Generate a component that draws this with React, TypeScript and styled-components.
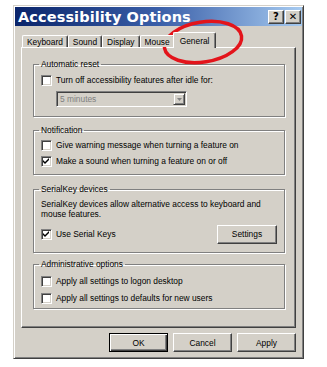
import React from 'react';
import styled, { createGlobalStyle } from 'styled-components';

const FACE = '#d4d0c8';
const SHADOW = '#808080';
const DARK = '#404040';
const FONT = `"Liberation Sans", Arial, sans-serif`;

const GlobalStyle = createGlobalStyle`
    html, body {
        margin: 0;
        background: #fff;
    }
    body {
        font-family: ${FONT};
        font-size: 8.4px;
        color: #000;
    }
`;

const Page = styled.div`
    padding: 5px 0 0 13px;
    width: 327px;
    height: 367px;
    box-sizing: border-box;
`;

const Dialog = styled.div`
    position: relative;
    width: 291px;
    height: 354px;
    box-sizing: border-box;
    background: ${FACE};
    border: 1px solid;
    border-color: ${FACE} ${DARK} ${DARK} ${FACE};
    box-shadow: inset 1px 1px 0 #fff, inset -1px -1px 0 ${SHADOW};
    padding: 1px;
    display: flex;
    flex-direction: column;
`;

const TitleBar = styled.div`
    height: 19px;
    display: flex;
    align-items: center;
    justify-content: space-between;
    padding: 0 1px 0 3px;
    background: linear-gradient(to right, #0a246a 0%, #3a5fa8 50%, #a6caf0 100%);
`;

const Title = styled.span`
    font-family: "DejaVu Sans", Verdana, sans-serif;
    font-weight: bold;
    font-size: 14.5px;
    color: #fff;
    letter-spacing: 0.1px;
`;

const TitleButtons = styled.div`
    display: flex;
    gap: 1px;
`;

const TitleButton = styled.div`
    width: 16px;
    height: 14px;
    box-sizing: border-box;
    background: ${FACE};
    border: 1px solid;
    border-color: #fff ${DARK} ${DARK} #fff;
    box-shadow: inset -1px -1px 0 ${SHADOW};
    display: flex;
    align-items: center;
    justify-content: center;
    font-weight: bold;
    font-size: 10px;
    font-family: "DejaVu Sans", sans-serif;
`;

const Body = styled.div`
    padding: 6px 6px 0 6px;
    display: flex;
    flex-direction: column;
`;

const TabStrip = styled.div`
    display: flex;
    align-items: flex-end;
    padding-left: 1px;
    height: 15px;
    position: relative;
    z-index: 1;
`;

const Tab = styled.div<{ $active?: boolean }>`
    height: ${p => (p.$active ? 16 : 12)}px;
    padding: 0 ${p => (p.$active ? 6 : 4)}px;
    margin: 0 ${p => (p.$active ? -2 : 0)}px;
    margin-bottom: ${p => (p.$active ? -1 : 0)}px;
    box-sizing: border-box;
    display: flex;
    align-items: center;
    background: ${FACE};
    border-top: 1px solid #fff;
    border-left: 1px solid #fff;
    border-right: 1px solid ${DARK};
    border-radius: 2px 2px 0 0;
    box-shadow: inset -1px 0 0 ${SHADOW};
    position: relative;
    z-index: ${p => (p.$active ? 2 : 0)};
`;

const Panel = styled.div`
    height: 281px;
    box-sizing: border-box;
    border: 1px solid;
    border-color: #fff ${DARK} ${DARK} #fff;
    box-shadow: inset -1px -1px 0 ${SHADOW};
    padding: 11px 10px 0 11px;
    display: flex;
    flex-direction: column;
`;

const Group = styled.fieldset<{ $gap: number; $bottom: number }>`
    margin: ${p => p.$gap}px 0 0 0;
    padding: 0 7px ${p => p.$bottom}px 7px;
    border: 1px solid ${SHADOW};
    box-shadow: 1px 1px 0 #fff, inset 1px 1px 0 #fff;
    min-inline-size: 0;
    display: flex;
    flex-direction: column;
`;

const Legend = styled.legend`
    padding: 0 2px;
    margin-left: -2px;
    line-height: 10px;
    height: 10px;
`;

const Row = styled.label<{ $top: number }>`
    display: flex;
    align-items: center;
    gap: 4px;
    height: 14px;
    margin-top: ${p => p.$top}px;
`;

const Box = styled.span`
    width: 11px;
    height: 11px;
    box-sizing: border-box;
    background: #fff;
    border: 1px solid;
    border-color: ${SHADOW} #fff #fff ${SHADOW};
    box-shadow: inset 1px 1px 0 ${DARK}, inset -1px -1px 0 ${FACE};
    display: flex;
    align-items: center;
    justify-content: center;
    flex-shrink: 0;
`;

const Select = styled.div`
    margin: 4px 0 0 15px;
    width: 131px;
    height: 16px;
    box-sizing: border-box;
    border: 1px solid;
    border-color: ${SHADOW} #fff #fff ${SHADOW};
    box-shadow: inset 1px 1px 0 ${DARK};
    display: flex;
    align-items: center;
    justify-content: space-between;
    padding: 0 1px 0 3px;
    color: ${SHADOW};
`;

const SelectArrow = styled.div`
    width: 12px;
    height: 12px;
    box-sizing: border-box;
    border: 1px solid;
    border-color: ${FACE} ${DARK} ${DARK} ${FACE};
    box-shadow: inset 1px 1px 0 #fff, inset -1px -1px 0 ${SHADOW};
    display: flex;
    align-items: center;
    justify-content: center;
`;

const Paragraph = styled.p`
    margin: 5px 0 0 0;
    line-height: 10px;
`;

const SplitRow = styled.div`
    display: flex;
    align-items: center;
    justify-content: space-between;
    margin-top: 6px;
    height: 18px;
`;

const Button = styled.div<{ $width: number; $default?: boolean }>`
    width: ${p => p.$width}px;
    height: 19px;
    box-sizing: border-box;
    background: ${FACE};
    border: 1px solid;
    border-color: ${p => (p.$default ? '#000' : `#fff ${DARK} ${DARK} #fff`)};
    box-shadow: ${p => (p.$default
        ? `inset 1px 1px 0 #fff, inset -1px -1px 0 ${DARK}, inset -2px -2px 0 ${SHADOW}`
        : `inset -1px -1px 0 ${SHADOW}`)};
    display: flex;
    align-items: center;
    justify-content: center;
`;

const ButtonBar = styled.div`
    display: flex;
    justify-content: flex-end;
    gap: 5px;
    margin-top: 5px;
`;

// red hand-drawn ring over the "General" tab
const Highlight = styled.svg`
    position: absolute;
    left: 146px;
    top: 10px;
    pointer-events: none;
`;

const Check: React.FC<{ checked?: boolean }> = ({ checked }) => (
    <Box>
        {checked && (
            <svg width="7" height="7" viewBox="0 0 7 7">
                <path d="M0 2 L2 4 L6 0 L6 2 L2 6 L0 4 Z" fill="#000" />
            </svg>
        )}
    </Box>
);

const tabs = ['Keyboard', 'Sound', 'Display', 'Mouse', 'General'];

const App: React.FC = () => (
    <>
        <GlobalStyle />
        <Page>
            <Dialog>
                <TitleBar>
                    <Title>Accessibility Options</Title>
                    <TitleButtons>
                        <TitleButton>?</TitleButton>
                        <TitleButton>✕</TitleButton>
                    </TitleButtons>
                </TitleBar>
                <Body>
                    <TabStrip>
                        {tabs.map(t => <Tab key={t} $active={t === 'General'}>{t}</Tab>)}
                    </TabStrip>
                    <Panel>
                        <Group $gap={0} $bottom={9}>
                            <Legend>Automatic reset</Legend>
                            <Row $top={4}><Check />Turn off accessibility features after idle for:</Row>
                            <Select>
                                5 minutes
                                <SelectArrow>
                                    <svg width="5" height="3" viewBox="0 0 5 3"><path d="M0 0 H5 L2.5 3 Z" fill={SHADOW} /></svg>
                                </SelectArrow>
                            </Select>
                        </Group>
                        <Group $gap={8} $bottom={6}>
                            <Legend>Notification</Legend>
                            <Row $top={3}><Check />Give warning message when turning a feature on</Row>
                            <Row $top={2}><Check checked />Make a sound when turning a feature on or off</Row>
                        </Group>
                        <Group $gap={9} $bottom={9}>
                            <Legend>SerialKey devices</Legend>
                            <Paragraph>SerialKey devices allow alternative access to keyboard and mouse features.</Paragraph>
                            <SplitRow>
                                <Row $top={0}><Check checked />Use Serial Keys</Row>
                                <Button $width={60}>Settings</Button>
                            </SplitRow>
                        </Group>
                        <Group $gap={6} $bottom={3}>
                            <Legend>Administrative options</Legend>
                            <Row $top={5}><Check />Apply all settings to logon desktop</Row>
                            <Row $top={3}><Check />Apply all settings to defaults for new users</Row>
                        </Group>
                    </Panel>
                    <ButtonBar>
                        <Button $width={59} $default>OK</Button>
                        <Button $width={59}>Cancel</Button>
                        <Button $width={59}>Apply</Button>
                    </ButtonBar>
                </Body>
                <Highlight width="86" height="52" viewBox="0 0 86 52">
                    <ellipse cx="43" cy="26" rx="39" ry="20" fill="none" stroke="#e3141b" strokeWidth="3.5" transform="rotate(-9 43 26)" />
                </Highlight>
            </Dialog>
        </Page>
    </>
);

export default App;
